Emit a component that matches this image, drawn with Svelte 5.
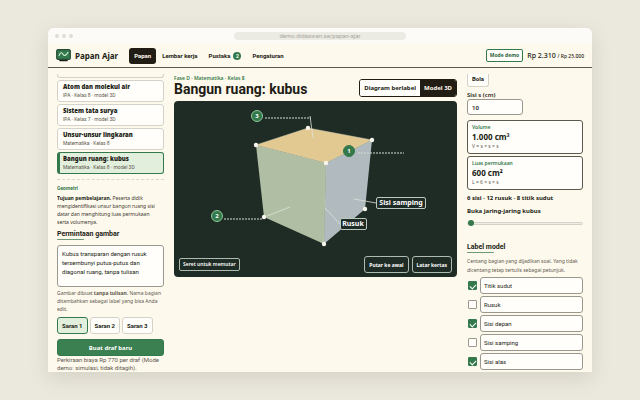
<script lang="ts">
  interface Lesson {
    title: string;
    meta: string;
  }

  interface ModelLabel {
    name: string;
    asked: boolean;
  }

  const lessons: Lesson[] = [
    { title: 'Atom dan molekul air', meta: 'IPA · Kelas 8 · model 3D' },
    { title: 'Sistem tata surya', meta: 'IPA · Kelas 7 · model 3D' },
    { title: 'Unsur-unsur lingkaran', meta: 'Matematika · Kelas 8' },
    { title: 'Bangun ruang: kubus', meta: 'Matematika · Kelas 8 · model 3D' }
  ];

  const tabs = ['Papan', 'Lembar kerja', 'Pustaka', 'Pengaturan'];
  const suggestions = ['Saran 1', 'Saran 2', 'Saran 3'];

  const corners = [
    [82, 44], [134, 27], [198, 39], [152, 62],
    [90, 116], [150, 143], [191, 108]
  ];

  const markers = [
    { n: 3, x: 83, y: 15, d: 'M91 17H137' },
    { n: 1, x: 175, y: 50, d: 'M184 52H230' },
    { n: 2, x: 43, y: 115, d: 'M50 118H88' }
  ];

  let activeTab = $state('Papan');
  let selected = $state(3);
  let suggestion = $state(0);
  let view = $state('3d');
  let side = $state('10');
  let unfold = $state(0);
  let prompt = $state('Kubus transparan dengan rusuk tersembunyi putus-putus dan diagonal ruang, tanpa tulisan');
  let labels: ModelLabel[] = $state([
    { name: 'Titik sudut', asked: true },
    { name: 'Rusuk', asked: false },
    { name: 'Sisi depan', asked: true },
    { name: 'Sisi samping', asked: false },
    { name: 'Sisi alas', asked: true }
  ]);

  const format = (n: number): string => String(n).replace(/\B(?=(\d{3})+$)/g, '.');
  let volume = $derived(format(Number(side) ** 3));
  let area = $derived(format(6 * Number(side) ** 2));
</script>

<div class="desktop">
  <div class="window">
    <div class="chrome">
      <div class="dots"><i></i><i></i><i></i></div>
      <div class="address">demo.didaswan.se/papan-ajar</div>
    </div>

    <header>
      <svg class="logo" viewBox="0 0 15 13" aria-hidden="true">
        <path d="M4 11.5h7" stroke="#211c14" stroke-width="1.6" stroke-linecap="round" />
        <rect x="0.7" y="0.7" width="13.6" height="9.6" rx="1.4" fill="#34794b" stroke="#244a34" stroke-width="1.2" />
        <path d="M3 6.6C4.5 3 5.8 3.2 7 5.2s2.700 1.700 5-1.800" fill="none" stroke="#d5efd8" stroke-width="1.1" stroke-linecap="round" />
      </svg>
      <span class="brand">Papan Ajar</span>
      <nav>
        {#each tabs as tab}
          <button class="tab" class:active={tab === activeTab} onclick={() => (activeTab = tab)}>
            {tab}
            {#if tab === 'Pustaka'}<span class="count">2</span>{/if}
          </button>
        {/each}
      </nav>
      <span class="mode">Mode demo</span>
      <span class="balance">Rp 2.310 <small>/ Rp 25.000</small></span>
    </header>

    <div class="columns">
      <aside class="left">
        <div class="lessons">
          <div class="lesson previous"></div>
          {#each lessons as lesson, index}
            <button class="lesson" class:selected={index === selected} onclick={() => (selected = index)}>
              <b>{lesson.title}</b>
              <span>{lesson.meta}</span>
            </button>
          {/each}
        </div>

        <div class="topic">Geometri</div>
        <p class="goal">
          <b>Tujuan pembelajaran.</b> Peserta didik<br />
          mengidentifikasi unsur bangun ruang sisi<br />
          datar dan menghitung luas permukaan<br />
          serta volumenya.
        </p>
        <h2><label for="prompt">Permintaan gambar</label></h2>
        <textarea id="prompt" bind:value={prompt}></textarea>
        <p class="hint">Gambar dibuat <b>tanpa tulisan</b>. Nama bagian ditambahkan sebagai label yang bisa Anda edit.</p>
        <div class="suggestions">
          {#each suggestions as name, index}
            <button class:chosen={index === suggestion} onclick={() => (suggestion = index)}>{name}</button>
          {/each}
        </div>
        <button class="draft">Buat draf baru</button>
        <p class="cost">Perkiraan biaya Rp 770 per draf (Mode demo: simulasi, tidak ditagih).</p>
      </aside>

      <main>
        <div class="heading">
          <div>
            <div class="eyebrow">Fase D · Matematika · Kelas 8</div>
            <h1>Bangun ruang: kubus</h1>
          </div>
          <div class="switch">
            <button class:on={view === 'diagram'} onclick={() => (view = 'diagram')}>Diagram berlabel</button>
            <button class:on={view === '3d'} onclick={() => (view = '3d')}>Model 3D</button>
          </div>
        </div>

        <div class="stage">
          <svg viewBox="0 0 283 176" role="img" aria-label="Bangun ruang: kubus">
            <polygon points="82,44 134,27 198,39 152,62" fill="#e2c992" />
            <polygon points="82,44 152,62 150,143 90,116" fill="#b0bea3" />
            <polygon points="152,62 198,39 191,108 150,143" fill="#b0babf" />
            <path class="edge" d="M82 44L134 27L198 39L152 62ZM152 62L150 143" />
            {#each corners as [x, y]}
              <circle cx={x} cy={y} r="2.2" fill="#f5f5ec" />
            {/each}
            <path class="leader" d="M136 15L139 37M93 115L116 106M180 98L202 102M151 107L166 123" />
            {#each markers as m}
              <path class="dots-line" d={m.d} />
              <circle cx={m.x} cy={m.y} r="5.500" fill="#34794b" stroke={m.n === 1 ? '#34794b' : '#8fc79b'} />
              <text class="number" x={m.x} y={m.y + 2}>{m.n}</text>
            {/each}
            <rect class="tag" x="202.500" y="96.500" width="49" height="11" rx="1.500" />
            <text class="tag-text" x="227" y="104">Sisi samping</text>
            <rect class="tag" x="166.500" y="117.500" width="26" height="11" rx="1.500" />
            <text class="tag-text" x="179" y="125">Rusuk</text>
          </svg>
          <div class="stage-bar">
            <span class="drag">Seret untuk memutar</span>
            <button>Putar ke awal</button>
            <button>Latar kertas</button>
          </div>
        </div>
      </main>

      <aside class="right">
        <button class="shape">Bola</button>
        <label class="field" for="side">Sisi s (cm)</label>
        <input id="side" class="side" type="text" bind:value={side} />
        <div class="result">
          <span class="name">Volume</span>
          <strong>{volume} cm³</strong>
          <span class="formula">V = s × s × s</span>
        </div>
        <div class="result">
          <span class="name">Luas permukaan</span>
          <strong>{area} cm²</strong>
          <span class="formula">L = 6 × s × s</span>
        </div>
        <p class="facts">6 sisi · 12 rusuk · 8 titik sudut</p>
        <label class="unfold" for="unfold">Buka jaring-jaring kubus</label>
        <input id="unfold" type="range" min="0" max="100" bind:value={unfold} />
        <h2>Label model</h2>
        <p class="note">Centang bagian yang dijadikan soal. Yang tidak dicentang tetap tertulis sebagai petunjuk.</p>
        {#each labels as label, index}
          <div class="label-row">
            <input type="checkbox" aria-label="Jadikan soal: {label.name}" bind:checked={labels[index].asked} />
            <input type="text" aria-label="Nama label" bind:value={labels[index].name} />
          </div>
        {/each}
      </aside>
    </div>
  </div>
</div>

<style>
  :global(body) {
    margin: 0;
    background: #ebe8de;
  }

  * {
    box-sizing: border-box;
  }

  .desktop {
    display: flex;
    height: 100vh;
    padding: 28px 48px;
    font-family: Roboto, "Noto Sans", sans-serif;
    font-size: 6px;
    line-height: 8px;
    color: #211c14;
  }

  .brand,
  .mode,
  .balance,
  .lesson b,
  .goal,
  .hint,
  .draft,
  .eyebrow,
  .switch,
  .stage,
  .field,
  .result,
  .facts,
  .unfold,
  .note {
    font-family: "Noto Sans", "Open Sans", sans-serif;
  }

  .window {
    flex: 1;
    min-width: 0;
    display: flex;
    flex-direction: column;
    overflow: hidden;
    background: #fef9ed;
    border-radius: 6px 6px 0 0;
    box-shadow: 0 6px 20px rgba(80, 70, 45, 0.14);
  }

  button,
  input,
  textarea {
    margin: 0;
    padding: 0;
    font: inherit;
    color: inherit;
    background: #fffefa;
    border: 1px solid #d5d3c9;
    border-radius: 3px;
  }

  button {
    font-weight: 700;
    white-space: nowrap;
    cursor: pointer;
  }

  p,
  h1,
  h2 {
    margin: 0;
  }

  .chrome {
    flex: none;
    display: grid;
    grid-template-columns: 1fr 172px 1fr;
    align-items: center;
    height: 16px;
    padding: 0 7px;
    background: #fcfbf8;
  }

  .dots {
    display: flex;
    gap: 3px;
  }

  .dots i {
    width: 4px;
    height: 4px;
    border-radius: 50%;
    background: #dfddd5;
  }

  .address {
    height: 8px;
    border-radius: 4px;
    background: #ebeae3;
    color: #aaa89f;
    font-size: 6px;
    text-align: center;
  }

  header {
    flex: none;
    display: flex;
    align-items: center;
    height: 24px;
    padding: 0 8px;
    border-bottom: 1px solid #5d584e;
  }

  .logo {
    width: 15px;
    height: 13px;
  }

  .brand {
    margin-left: 4px;
    font-size: 8px;
    font-weight: 700;
  }

  nav {
    display: flex;
    flex: 1;
    gap: 1px;
    margin-left: 11px;
  }

  .tab {
    display: flex;
    align-items: center;
    gap: 3px;
    height: 16px;
    padding: 0 5px;
    background: none;
    border: 0;
  }

  .tab.active {
    background: #211c14;
    color: #fffaf0;
  }

  .count {
    width: 8px;
    border-radius: 50%;
    background: #34794b;
    color: #fff;
    font-size: 5px;
    text-align: center;
  }

  .mode {
    padding: 1px 3px;
    border: 1px solid #34794b;
    border-radius: 2px;
    color: #2c6540;
    font-size: 5px;
    line-height: 9px;
    font-weight: 700;
    background: #fffefa;
  }

  .balance {
    margin-left: 4px;
    font-size: 7px;
    font-weight: 500;
  }

  .balance small {
    font-size: 5px;
  }

  .columns {
    flex: 1;
    min-height: 0;
    display: grid;
    grid-template-columns: 107px 1fr 116px;
    gap: 10px;
    padding: 6px 9px 0;
  }

  aside {
    display: flex;
    flex-direction: column;
    min-height: 0;
    overflow: hidden;
  }

  aside > * {
    flex: none;
  }

  .lessons {
    display: flex;
    flex-direction: column;
    gap: 2px;
    padding-bottom: 5px;
    border-bottom: 1px dashed #dcd8ca;
  }

  .lesson {
    display: flex;
    flex-direction: column;
    justify-content: center;
    height: 22px;
    padding: 0 5px;
    line-height: 8px;
    text-align: left;
  }

  .lesson.previous {
    height: 4px;
    border: 1px solid #d5d3c9;
    border-top: 0;
    border-radius: 0 0 3px 3px;
  }

  .lesson span {
    font-size: 5px;
    font-weight: 400;
    color: #5d584e;
  }

  .lesson.selected {
    background: #e2efdd;
    border-color: #34794b;
    border-left-width: 3px;
    padding-left: 3px;
  }

  .topic {
    margin-top: 4px;
    font-size: 5px;
    font-weight: 700;
    color: #34794b;
  }

  .goal {
    margin-top: 2px;
    color: #3d382e;
    font-size: 5px;
    white-space: nowrap;
  }

  .goal b {
    color: #211c14;
  }

  h2 {
    font-size: 7px;
    line-height: 9px;
    font-weight: 700;
  }

  h2::after {
    content: '';
    display: block;
    width: 27px;
    height: 1px;
    background: #6f9a7a;
    border-radius: 1px;
  }

  .left h2 {
    margin-top: 4px;
  }

  textarea {
    display: block;
    width: 100%;
    height: 42px;
    margin-top: 5px;
    padding: 3px 4px;
    border-color: #9a978d;
    line-height: 9px;
    resize: none;
  }

  .hint,
  .cost,
  .note {
    color: #5d584e;
  }

  .hint {
    margin-top: 2px;
    font-size: 5px;
  }

  .suggestions {
    display: flex;
    gap: 2px;
    margin-top: 4px;
  }

  .suggestions button {
    height: 17px;
    padding: 0 4px;
  }

  .suggestions .chosen {
    background: #e2efdd;
    border-color: #34794b;
  }

  .draft {
    height: 17px;
    margin-top: 5px;
    background: #3b8050;
    border-color: #34794b;
    color: #fff;
  }

  main {
    min-width: 0;
  }

  .heading {
    display: flex;
    justify-content: space-between;
    align-items: flex-end;
    padding-bottom: 4px;
  }

  .eyebrow {
    font-size: 5px;
    font-weight: 600;
    color: #34794b;
  }

  h1 {
    font-size: 14px;
    line-height: 15px;
    font-weight: 700;
    white-space: nowrap;
  }

  .switch {
    display: flex;
    border: 1px solid #211c14;
    border-radius: 3px;
    overflow: hidden;
  }

  .switch button {
    height: 16px;
    padding: 0 4px;
    border: 0;
    border-radius: 0;
  }

  .switch .on {
    background: #211c14;
    color: #fffaf0;
  }

  .stage {
    position: relative;
    border-radius: 4px;
    overflow: hidden;
    background: #1f2c26;
  }

  .stage svg {
    display: block;
    width: 100%;
  }

  .edge {
    fill: none;
    stroke: #d3d3b8;
    stroke-width: 0.5;
  }

  .leader {
    fill: none;
    stroke: #dfe3d8;
    stroke-width: 0.8;
  }

  .dots-line {
    fill: none;
    stroke: #d5dcd3;
    stroke-width: 1;
    stroke-dasharray: 2 1;
  }

  .number,
  .tag-text {
    fill: #fff;
    font-size: 6px;
    font-weight: 700;
    text-anchor: middle;
  }

  .tag-text {
    font-size: 7px;
  }

  .tag {
    fill: #1f2c26;
    stroke: #bcc8bd;
    stroke-width: 1;
  }

  .stage-bar {
    position: absolute;
    right: 5px;
    bottom: 4px;
    left: 5px;
    display: flex;
    align-items: center;
    gap: 3px;
    font-size: 5px;
  }

  .stage-bar button {
    height: 17px;
    padding: 0 4px;
    background: #1f2c26;
    border-color: #aebbb0;
    color: #fff;
  }

  .drag {
    margin-right: auto;
    padding: 1px 3px;
    border: 1px solid #aebbb0;
    border-radius: 2px;
    color: #fff;
    line-height: 9px;
    font-weight: 600;
  }

  .shape {
    align-self: flex-start;
    height: 13px;
    padding: 0 4px 2px;
    border-top: 0;
    border-radius: 0 0 3px 3px;
  }

  .field {
    margin-top: 4px;
    font-weight: 600;
  }

  .side {
    width: 56px;
    height: 16px;
    padding: 0 4px;
    border-color: #9a978d;
    font-weight: 600;
  }

  .result {
    display: flex;
    flex-direction: column;
    margin-top: 2px;
    padding: 3px 4px;
    border: 1px solid #5d584e;
    border-radius: 3px;
    background: #fffefa;
  }

  .side + .result {
    margin-top: 5px;
  }

  .name {
    color: #34794b;
    font-size: 5px;
    font-weight: 600;
    line-height: 7px;
  }

  .result strong {
    font-size: 8px;
    line-height: 11px;
  }

  .formula {
    color: #5d584e;
    font-size: 5px;
    line-height: 8px;
  }

  .facts,
  .unfold {
    margin-top: 5px;
    font-weight: 700;
  }

  .facts {
    margin-top: 4px;
  }

  input[type='range'] {
    appearance: none;
    width: 100%;
    height: 7px;
    margin-top: 5px;
    background: none;
    border: 0;
  }

  input[type='range']::-webkit-slider-runnable-track {
    height: 3px;
    border: 1px solid #d5d3c9;
    border-radius: 2px;
    background: #efede6;
  }

  input[type='range']::-webkit-slider-thumb {
    appearance: none;
    width: 6px;
    height: 6px;
    margin-top: -3px;
    border-radius: 50%;
    background: #34794b;
  }

  .right h2 {
    margin-top: 16px;
  }

  .note {
    margin-top: 4px;
    margin-bottom: 2px;
    font-size: 5px;
    line-height: 9px;
  }

  .label-row {
    display: flex;
    align-items: center;
    gap: 3px;
    margin-bottom: 2px;
  }

  .label-row input[type='text'] {
    flex: 1;
    min-width: 0;
    height: 17px;
    padding: 0 3px;
    border-color: #9a978d;
  }

  input[type='checkbox'] {
    appearance: none;
    display: grid;
    place-items: center;
    width: 9px;
    height: 9px;
    margin-left: 1px;
    border-color: #9a978d;
    border-radius: 1px;
  }

  input[type='checkbox']:checked {
    background: #34794b;
    border-color: #34794b;
  }

  input[type='checkbox']:checked::after {
    content: '';
    width: 5px;
    height: 3px;
    border: solid #fff;
    border-width: 0 0 1px 1px;
    transform: rotate(-45deg);
  }
</style>
